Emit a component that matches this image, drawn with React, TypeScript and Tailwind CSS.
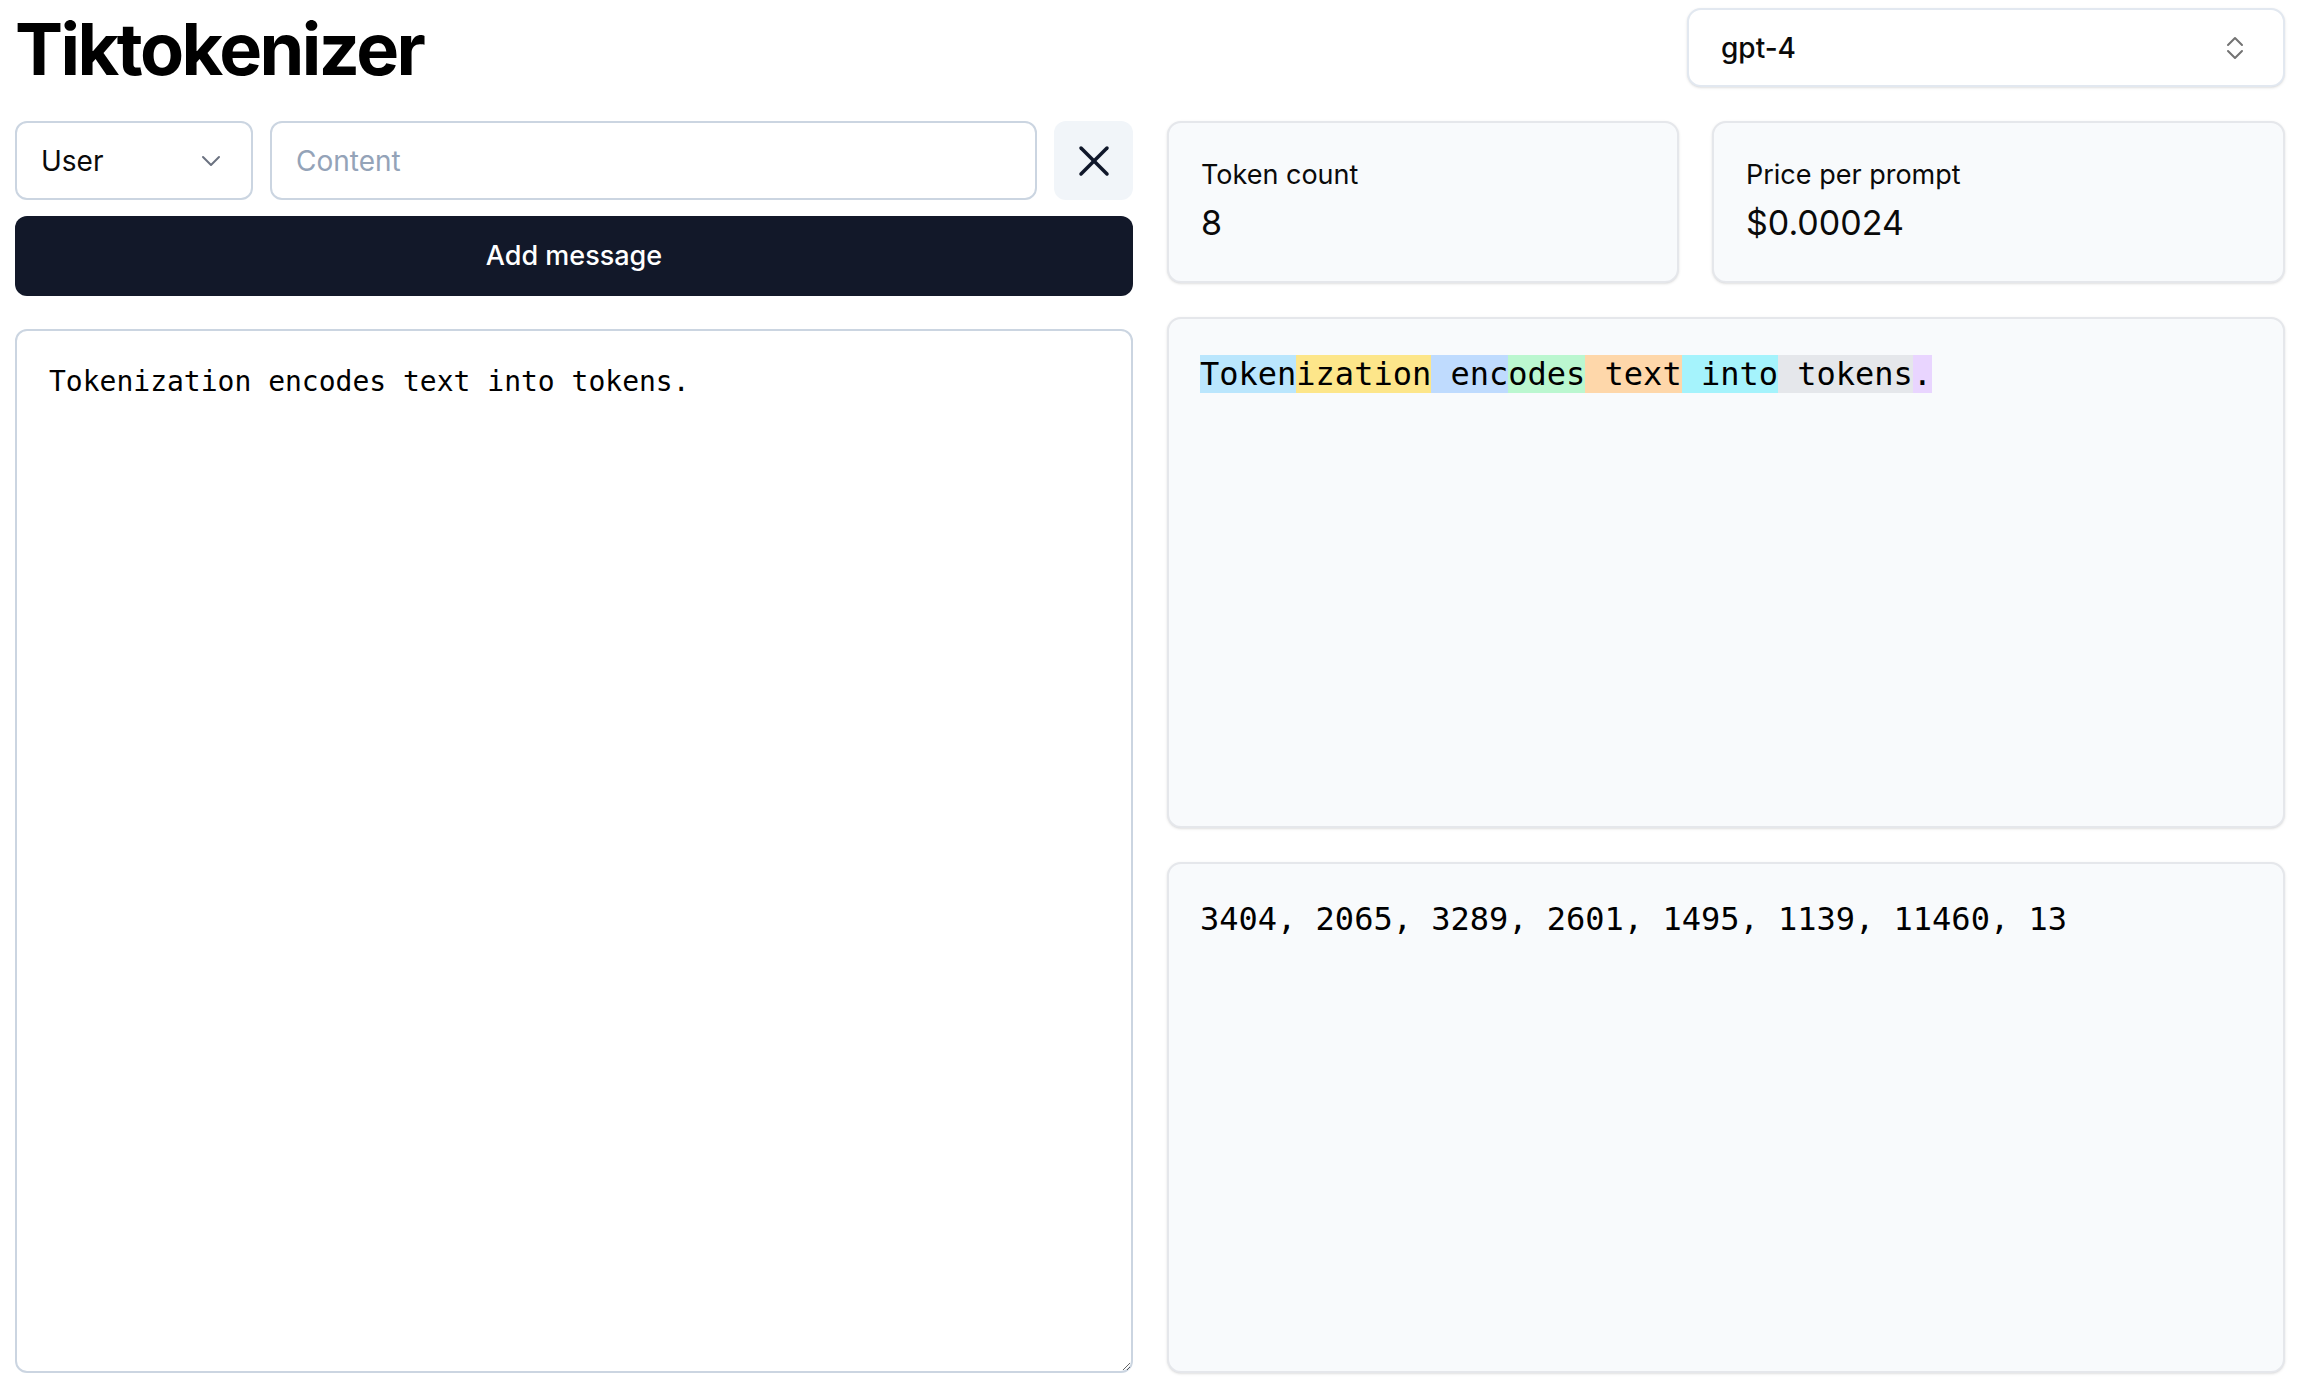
import React from 'react';

const tokens = [
  { text: 'Token', bg: 'bg-[#bae6fd]' },
  { text: 'ization', bg: 'bg-[#fde68a]' },
  { text: ' enc', bg: 'bg-[#bfdbfe]' },
  { text: 'odes', bg: 'bg-[#bbf7d0]' },
  { text: ' text', bg: 'bg-[#fed7aa]' },
  { text: ' into', bg: 'bg-[#a5f3fc]' },
  { text: ' tokens', bg: 'bg-[#e5e7eb]' },
  { text: '.', bg: 'bg-[#e9d5ff]' },
];

const ids = [3404, 2065, 3289, 2601, 1495, 1139, 11460, 13];

const App: React.FC = () => {
  return (
    <div className="min-h-screen w-full bg-white pl-[15px] pr-[25px] pt-[8px] text-[#0a0a0a] font-['Inter',sans-serif]">
      {/* Header */}
      <div className="flex items-start justify-between">
        <h1 className="mt-[5px] text-[72px] font-bold leading-none tracking-[-0.035em] text-black">Tiktokenizer</h1>
        <button className="flex h-[79px] w-[598px] items-center justify-between rounded-[14px] border-2 border-[#e2e8f0] bg-white pl-[32px] pr-[39px] text-[28px] font-medium text-[#0a0a0a] shadow-sm">
          <span>gpt-4</span>
          <svg width="18" height="24" viewBox="0 0 18 24" fill="none" stroke="#737373" strokeWidth="2" strokeLinecap="round" strokeLinejoin="round">
            <path d="M2 9 L9 2 L16 9" />
            <path d="M2 15 L9 22 L16 15" />
          </svg>
        </button>
      </div>

      <div className="mt-[34px] grid grid-cols-2 gap-x-[34px]">
        {/* Left column */}
        <div className="flex flex-col">
          <div className="flex h-[79px] gap-[17px]">
            <button className="flex w-[238px] items-center justify-between rounded-[12px] border-2 border-[#cbd5e1] bg-white pl-[24px] pr-[30px] text-[28px] text-[#0a0a0a]">
              <span>User</span>
              <svg width="20" height="12" viewBox="0 0 20 12" fill="none" stroke="#6b7280" strokeWidth="2" strokeLinecap="round" strokeLinejoin="round">
                <path d="M2 2 L10 10 L18 2" />
              </svg>
            </button>
            <input
              className="flex-1 rounded-[12px] border-2 border-[#cbd5e1] bg-white px-[24px] text-[28px] text-[#0a0a0a] outline-none placeholder:text-[#94a3b8]"
              placeholder="Content"
            />
            <button className="flex w-[79px] items-center justify-center rounded-[12px] bg-[#f1f5f9]">
              <svg width="32" height="32" viewBox="0 0 32 32" fill="none" stroke="#0f172a" strokeWidth="3.5" strokeLinecap="round">
                <path d="M3 3 L29 29" />
                <path d="M29 3 L3 29" />
              </svg>
            </button>
          </div>
          <button className="mt-[16px] h-[80px] w-full rounded-[12px] bg-[#121829] text-[27px] font-medium text-white">
            Add message
          </button>
          <textarea
            className="mt-[33px] h-[1044px] w-full rounded-[12px] border-2 border-[#cbd5e1] bg-white px-[32px] py-[30px] text-[28px] leading-[1.5] text-black outline-none font-['DejaVu_Sans_Mono',monospace]"
            defaultValue="Tokenization encodes text into tokens."
          />
        </div>

        {/* Right column */}
        <div className="flex flex-col gap-[34px]">
          <div className="flex gap-[33px]">
            <div className="h-[162px] w-[512px] rounded-[14px] border-2 border-[#e5e7eb] bg-[#f8fafc] px-[32px] pt-[32px] shadow-sm">
              <div className="text-[27px] leading-[1.5]">Token count</div>
              <div className="mt-[6px] text-[34px] leading-[1.25]">8</div>
            </div>
            <div className="h-[162px] flex-1 rounded-[14px] border-2 border-[#e5e7eb] bg-[#f8fafc] px-[32px] pt-[32px] shadow-sm">
              <div className="text-[27px] leading-[1.5]">Price per prompt</div>
              <div className="mt-[6px] text-[34px] leading-[1.25]">$0.00024</div>
            </div>
          </div>

          <div className="h-[511px] rounded-[14px] border-2 border-[#e5e7eb] bg-[#f8fafc] px-[31px] py-[31px] shadow-sm">
            <pre className="whitespace-pre-wrap text-[32px] leading-[1.5] text-black font-['DejaVu_Sans_Mono',monospace]">
              {tokens.map((t, i) => (
                <span key={i} className={t.bg}>{t.text}</span>
              ))}
            </pre>
          </div>

          <div className="h-[511px] rounded-[14px] border-2 border-[#e5e7eb] bg-[#f8fafc] px-[31px] py-[31px] shadow-sm">
            <pre className="whitespace-pre-wrap text-[32px] leading-[1.5] text-black font-['DejaVu_Sans_Mono',monospace]">
              {ids.join(', ')}
            </pre>
          </div>
        </div>
      </div>
    </div>
  );
};

export default App;
